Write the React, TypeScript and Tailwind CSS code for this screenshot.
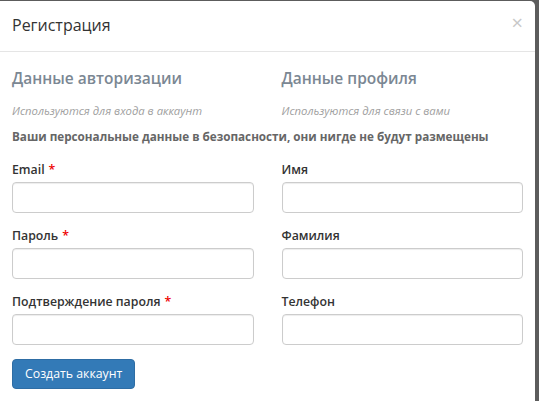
const LEFT = [
  { label: "Email", required: true, type: "email" },
  { label: "Пароль", required: true, type: "password" },
  { label: "Подтверждение пароля", required: true, type: "password" },
];

const RIGHT = [
  { label: "Имя", required: false, type: "text" },
  { label: "Фамилия", required: false, type: "text" },
  { label: "Телефон", required: false, type: "tel" },
];

function Field({ label, required, type }: { label: string; required: boolean; type: string }) {
  return (
    <div className="mb-[5px]">
      <label className="block h-[22px] pt-[1px] text-[12.3px] font-semibold leading-[18px] text-[#333]">
        {label}
        {required && <span className="ml-1 text-[#e00]">*</span>}
      </label>
      <input
        type={type}
        className="block h-[31px] w-full rounded-[4px] border border-[#ccc] bg-white px-3 text-[13px] shadow-[inset_0_1px_1px_rgba(0,0,0,0.075)] outline-none"
      />
      <div className="h-[8px]" />
    </div>
  );
}

export default function App() {
  return (
    <div
      className="h-[401px] w-[539px] overflow-hidden bg-[#5c5c5c] pt-[1px]"
      style={{ fontFamily: '"Open Sans", "Noto Sans", sans-serif' }}
    >
      <div className="h-[420px] w-[535px] rounded-tr-[5px] bg-white">
        {/* Header */}
        <div className="flex h-[51px] items-center justify-between border-b border-[#e5e5e5] pl-3 pr-[12px]">
          <h4 className="pb-[3px] text-[16px] leading-none text-[#333]">Регистрация</h4>
          <button className="pb-[6px] text-[20px] leading-none text-[#c8c8c8]">×</button>
        </div>

        {/* Body */}
        <div className="px-3 pt-[14px]">
          <div className="grid grid-cols-2 gap-x-[28px]">
            <div>
              <h3 className="text-[15.5px] font-semibold leading-[24px] text-[#7b8793]">Данные авторизации</h3>
              <p className="mt-[13px] text-[11.3px] italic leading-[16px] text-[#a0a0a0]">Используются для входа в аккаунт</p>
            </div>
            <div>
              <h3 className="text-[15.5px] font-semibold leading-[24px] text-[#7b8793]">Данные профиля</h3>
              <p className="mt-[13px] text-[11.3px] italic leading-[16px] text-[#a0a0a0]">Используются для связи с вами</p>
            </div>
          </div>
          <p className="mt-[7px] text-[11.7px] font-bold leading-[20px] text-[#666]">
            Ваши персональные данные в безопасности, они нигде не будут размещены
          </p>

          <div className="mt-[14px] grid grid-cols-2 gap-x-[28px]">
            <div>
              {LEFT.map((f) => (
                <Field key={f.label} {...f} />
              ))}
            </div>
            <div>
              {RIGHT.map((f) => (
                <Field key={f.label} {...f} />
              ))}
            </div>
          </div>

          <button className="mt-[1px] h-[30px] rounded-[4px] border border-[#2e6da4] bg-[#337ab7] px-[12px] text-[12.3px] text-white">
            Создать аккаунт
          </button>
        </div>
      </div>
    </div>
  );
}
